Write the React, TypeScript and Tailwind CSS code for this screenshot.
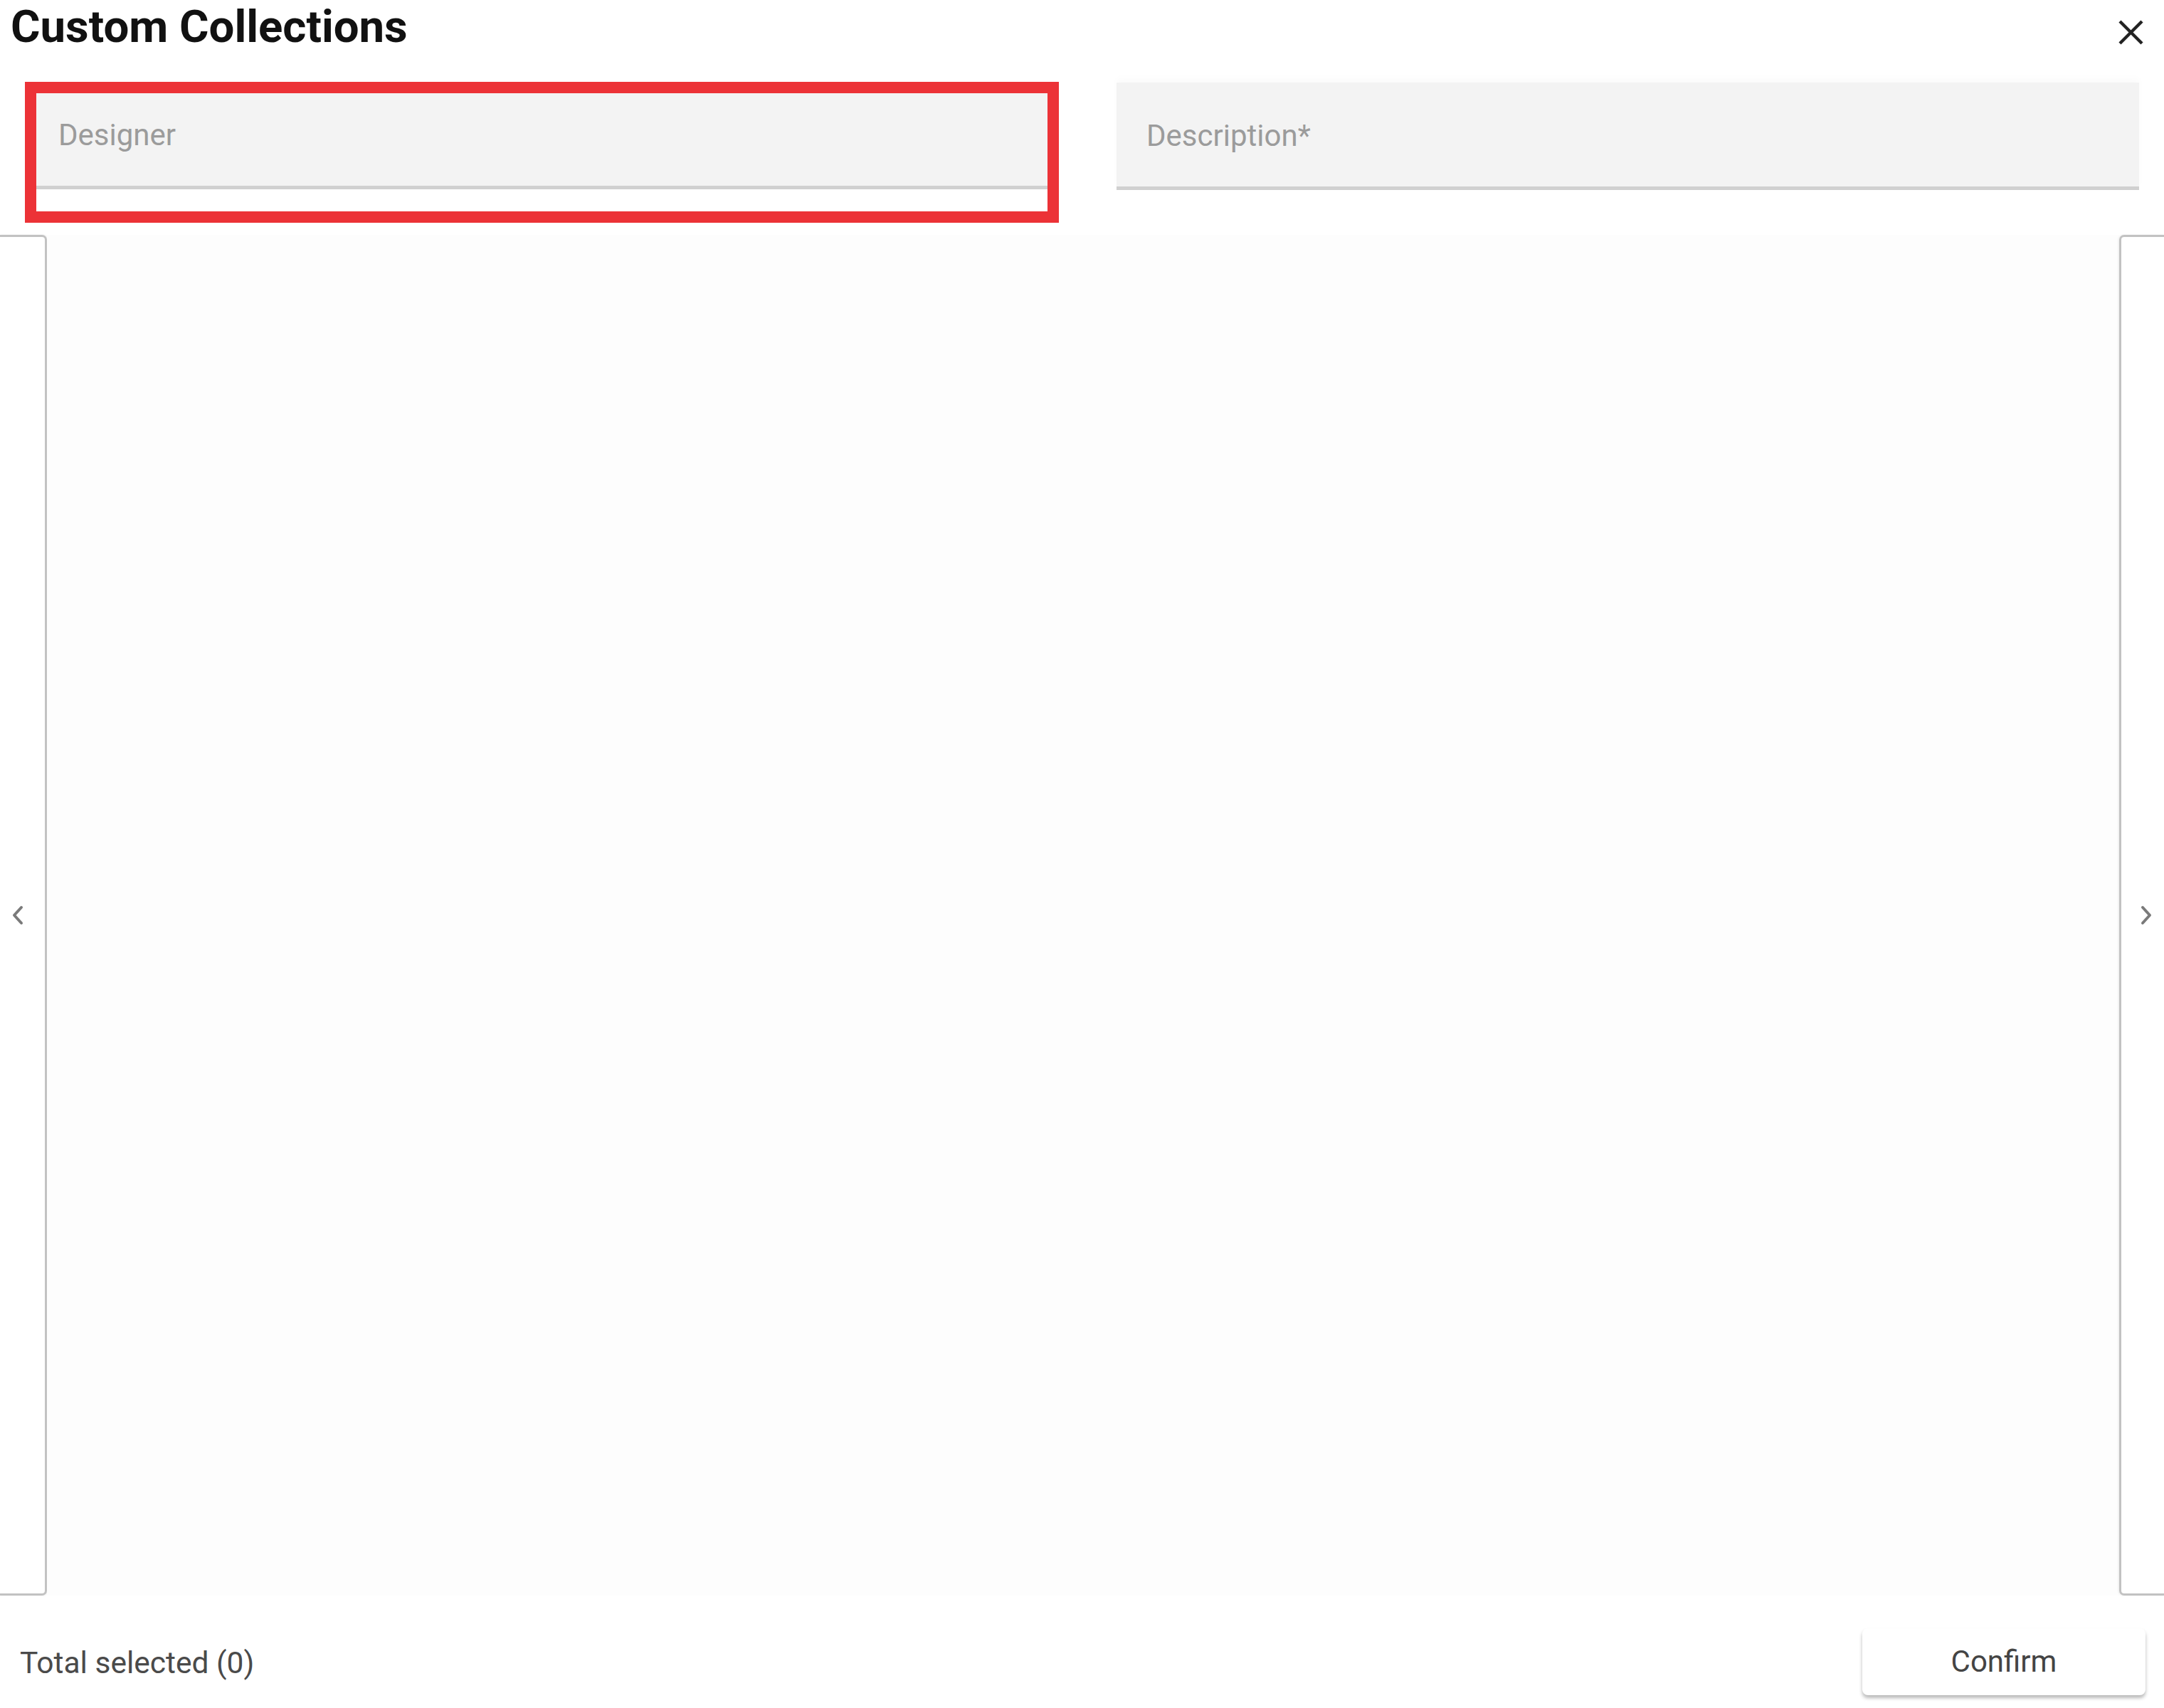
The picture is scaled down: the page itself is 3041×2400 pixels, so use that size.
import React from "react";

function Chevron({ dir }: { dir: "left" | "right" }) {
  return (
    <svg width="18" height="28" viewBox="0 0 18 28" fill="none">
      {dir === "left" ? (
        <polyline points="14,3 4,14 14,25" stroke="#7a7a7a" strokeWidth="4" strokeLinecap="round" strokeLinejoin="round" />
      ) : (
        <polyline points="4,3 14,14 4,25" stroke="#7a7a7a" strokeWidth="4" strokeLinecap="round" strokeLinejoin="round" />
      )}
    </svg>
  );
}

export default function App() {
  return (
    <div
      className="w-[3041px] h-[2400px] bg-white flex flex-col overflow-hidden"
      style={{ fontFamily: "Roboto, 'Liberation Sans', sans-serif" }}
    >
      {/* Header */}
      <div className="h-[115px] flex items-start justify-between pl-[15px] pr-[28px]">
        <h1 className="pt-[6px] text-[63.5px] leading-none font-bold text-[#111]">
          Custom Collections
        </h1>
        <button className="mt-[27px] w-[37px] h-[37px] flex items-center justify-center">
          <svg width="37" height="37" viewBox="0 0 37 37">
            <line x1="3" y1="3" x2="34" y2="34" stroke="#222" strokeWidth="4.5" />
            <line x1="34" y1="3" x2="3" y2="34" stroke="#222" strokeWidth="4.5" />
          </svg>
        </button>
      </div>

      {/* Fields */}
      <div className="flex items-start pl-[35px]">
        <div className="w-[1453px] h-[198px] border-[16px] border-[#ec3237] bg-white flex flex-col">
          <div className="h-[135px] bg-[#f3f3f3] border-b-[5px] border-[#d0d0d0] pl-[31px] pt-[38px]">
            <span className="text-[42px] leading-none text-[#9b9b9b]">Designer</span>
          </div>
        </div>
        <div className="ml-[81px] mt-px w-[1437px] h-[151px] bg-[#f3f3f3] border-b-[5px] border-[#d0d0d0] pl-[42px] pt-[54px] shadow-[0_-6px_10px_rgba(0,0,0,0.02)]">
          <span className="text-[42px] leading-none text-[#9b9b9b]">Description*</span>
        </div>
      </div>

      {/* Panels */}
      <div className="mt-[17px] h-[1912px] flex">
        <div className="w-[66px] h-full border-t-[3px] border-r-[3px] border-b-[3px] border-[#c2c2c2] rounded-tr-[7px] rounded-br-[7px] bg-white flex items-center pl-[16px] shadow-[1px_0_3px_rgba(0,0,0,0.08)]">
          <Chevron dir="left" />
        </div>
        <div className="flex-1 h-full bg-[#fdfdfd]" />
        <div className="w-[63px] h-full border-t-[3px] border-l-[3px] border-b-[3px] border-[#c2c2c2] rounded-tl-[7px] rounded-bl-[7px] bg-white flex items-center pl-[26px] shadow-[-1px_0_3px_rgba(0,0,0,0.08)]">
          <Chevron dir="right" />
        </div>
      </div>

      {/* Footer */}
      <div className="flex-1 flex items-start justify-between pl-[28px] pr-[26px] pt-[46px]">
        <div className="h-[94px] flex items-center pt-[4px]">
          <span className="text-[42.5px] leading-none text-[#4a4a4a]">Total selected (0)</span>
        </div>
        <button className="w-[398px] h-[94px] bg-white rounded-[8px] shadow-[0_4px_5px_rgba(0,0,0,0.28)] flex items-center justify-center">
          <span className="text-[42px] leading-none text-[#444]">Confirm</span>
        </button>
      </div>
    </div>
  );
}
